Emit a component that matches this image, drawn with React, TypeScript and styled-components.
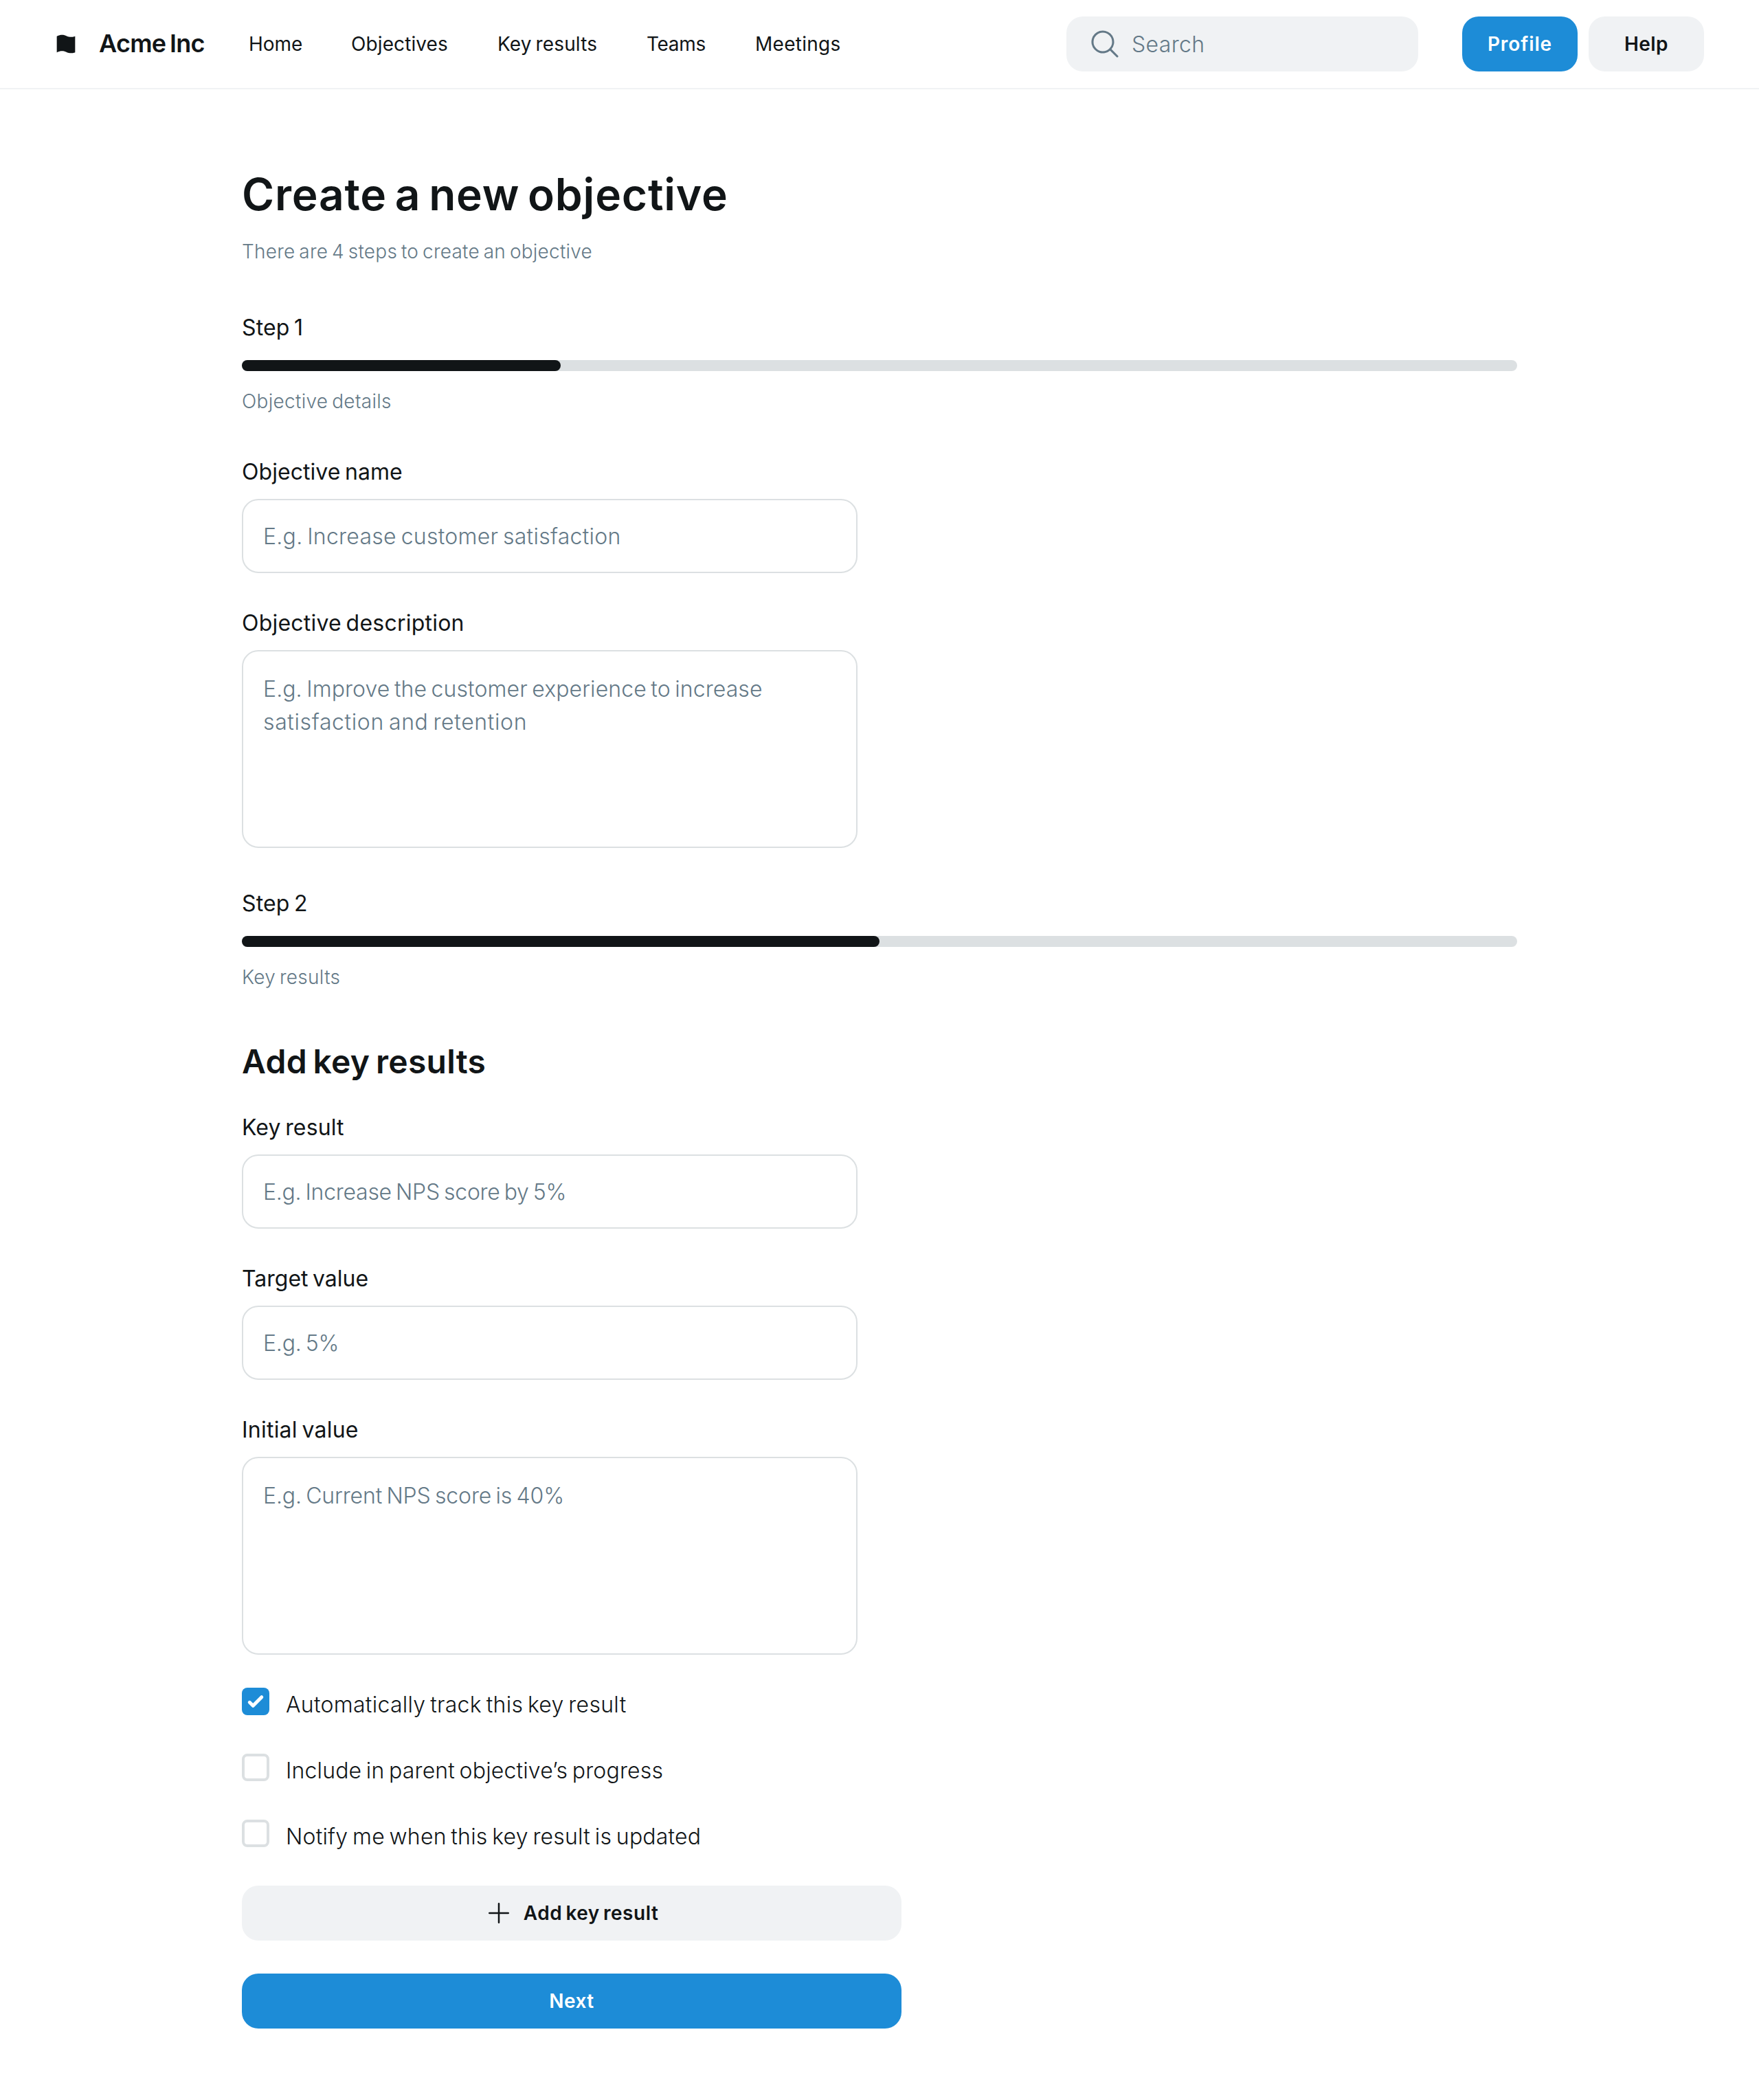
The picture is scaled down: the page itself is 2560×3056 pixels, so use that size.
import React, { useState } from "react";
import styled, { createGlobalStyle, css } from "styled-components";

const ink = "#111517";
const muted = "#647987";
const line = "#dce0e2";
const soft = "#f0f2f4";
const blue = "#1d8cd7";

const GlobalStyle = createGlobalStyle`
  *, *::before, *::after { box-sizing: border-box; }
  body {
    margin: 0;
    background: #fff;
    color: ${ink};
    font-family: Inter, "Noto Sans", "Liberation Sans", sans-serif;
  }
  input, textarea, button { font-family: inherit; color: inherit; margin: 0; }
`;

type Track = { $track?: number };
const tracking = css<Track>`
  letter-spacing: ${(p) => p.$track ?? 0}px;
  word-spacing: -0.08em;
`;

/* ---------- header ---------- */

const Page = styled.div`
  min-height: 3056px;
  background: #fff;
`;

const Header = styled.header`
  display: flex;
  align-items: center;
  justify-content: space-between;
  height: 130px;
  padding: 0 80px;
  border-bottom: 2px solid ${soft};
`;

const HeaderStart = styled.div`
  display: flex;
  align-items: center;
  gap: 64px;
`;

const Brand = styled.div`
  display: flex;
  align-items: center;
  gap: 32px;
  width: 218px;
`;

const BrandMark = styled.svg`
  width: 32px;
  height: 32px;
  flex: none;
`;

const BrandName = styled.h2<Track>`
  margin: 0;
  padding-bottom: 2px;
  font-size: 36px;
  line-height: 45px;
  font-weight: 600;
  white-space: nowrap;
  ${tracking}
`;

const Nav = styled.nav`
  display: grid;
  grid-template-columns: 77px 141px 145px 86px auto;
  column-gap: 72px;
`;

const NavLink = styled.a<Track>`
  font-size: 28px;
  line-height: 42px;
  font-weight: 400;
  white-space: nowrap;
  color: ${ink};
  text-decoration: none;
  ${tracking}
`;

const HeaderEnd = styled.div`
  display: flex;
  gap: 64px;
`;

const SearchBox = styled.label`
  display: flex;
  align-items: center;
  gap: 15px;
  width: 512px;
  height: 80px;
  padding-left: 32px;
  border-radius: 24px;
  background: ${soft};
  color: ${muted};
`;

const SearchInput = styled.input`
  flex: 1;
  min-width: 0;
  height: 50px;
  border: 0;
  padding: 1px 0 0;
  outline: none;
  background: transparent;
  font-size: 32px;
  font-weight: 300;
  letter-spacing: 0.36px;
  &::placeholder {
    color: ${muted};
    opacity: 1;
  }
`;

const HeaderButtons = styled.div`
  display: flex;
  gap: 16px;
`;

const Button = styled.button<Track & { $primary?: boolean; $width: number }>`
  display: flex;
  align-items: center;
  justify-content: center;
  gap: 16px;
  width: ${(p) => p.$width}px;
  height: 80px;
  padding: 0;
  border: 0;
  border-radius: 24px;
  background: ${(p) => (p.$primary ? blue : soft)};
  color: ${(p) => (p.$primary ? "#fff" : ink)};
  font-size: 28px;
  line-height: 42px;
  font-weight: 600;
  ${tracking}
`;

/* ---------- form ---------- */

const Main = styled.main`
  display: flex;
  flex-direction: column;
  width: 1856px;
  margin: 0 auto;
  padding-top: 112px;
`;

const Title = styled.h1<Track>`
  margin: 0;
  height: 80px;
  font-size: 64px;
  line-height: 82px;
  font-weight: 600;
  ${tracking}
`;

const Caption = styled.p<Track>`
  margin: 24px 0 0;
  height: 42px;
  font-size: 28px;
  line-height: 40px;
  font-weight: 300;
  color: ${muted};
  ${tracking}
`;

const StepBlock = styled.section<{ $top: number }>`
  padding-top: ${(p) => p.$top}px;
  padding-bottom: 32px;
`;

const Label = styled.span<Track>`
  display: block;
  height: 48px;
  font-size: 32px;
  line-height: 50px;
  font-weight: 400;
  ${tracking}
`;

const Bar = styled.div`
  margin-top: 24px;
  height: 16px;
  border-radius: 8px;
  background: ${line};
`;

const BarFill = styled.div`
  height: 100%;
  border-radius: 8px;
  background: ${ink};
`;

const SectionTitle = styled.h3<Track>`
  margin: 0;
  padding: 40px 0 18px;
  font-size: 48px;
  line-height: 58px;
  font-weight: 600;
  ${tracking}
`;

const Field = styled.label`
  display: block;
  width: 896px;
  padding: 24px 0;
`;

const fieldFrame = css`
  border: 2px solid ${line};
  border-radius: 24px;
  background: #fff;
`;

const Input = styled.input<Track>`
  ${fieldFrame}
  display: block;
  width: 100%;
  height: 108px;
  margin-top: 16px;
  padding: 1px 29px 0;
  outline: none;
  font-size: 32px;
  font-weight: 300;
  ${tracking}
  &::placeholder {
    color: ${muted};
    opacity: 1;
  }
`;

const AreaFrame = styled.div`
  display: grid;
  height: 288px;
  margin-top: 16px;
`;

const Area = styled.textarea`
  ${fieldFrame}
  grid-area: 1 / 1;
  width: 100%;
  height: 100%;
  padding: 31px 29px;
  resize: none;
  outline: none;
  font-size: 32px;
  line-height: 48px;
  font-weight: 300;
`;

const Hint = styled.span`
  grid-area: 1 / 1;
  padding: 33px 31px;
  pointer-events: none;
  color: ${muted};
  font-size: 32px;
  line-height: 48px;
  font-weight: 300;
`;

const HintLine = styled.span<Track>`
  display: block;
  white-space: nowrap;
  ${tracking}
`;

const CheckRow = styled.label`
  display: flex;
  gap: 24px;
  padding: 24px 0;
`;

const CheckBox = styled.span<{ $on: boolean }>`
  display: flex;
  flex: none;
  width: 40px;
  height: 40px;
  border: ${(p) => (p.$on ? "0" : `4px solid ${line}`)};
  border-radius: 8px;
  background: ${(p) => (p.$on ? blue : "transparent")};
`;

const CheckText = styled.span<Track>`
  height: 48px;
  font-size: 32px;
  line-height: 50px;
  font-weight: 300;
  ${tracking}
`;

const Action = styled.div`
  padding: 24px 0;
`;

/* ---------- icons ---------- */

const FlagIcon = () => (
  <BrandMark viewBox="0 0 48 48" fill={ink}>
    <path d="M4 42.4379C4 42.4379 14.0962 36.0744 24 41.1692C35.0664 46.8624 44 42.2078 44 42.2078L44 7.01134C44 7.01134 35.068 11.6577 24.0031 5.96913C14.0971 0.876274 4 7.27094 4 7.27094L4 42.4379Z" />
  </BrandMark>
);

const SearchIcon = () => (
  <svg width="48" height="48" viewBox="0 0 256 256" fill="currentColor">
    <path d="M229.66,218.34l-50.07-50.06a88.11,88.11,0,1,0-11.31,11.31l50.06,50.07a8,8,0,0,0,11.32-11.32ZM40,112a72,72,0,1,1,72,72A72.08,72.08,0,0,1,40,112Z" />
  </svg>
);

const PlusIcon = () => (
  <svg width="40" height="40" viewBox="0 0 256 256" fill="currentColor">
    <path d="M224,128a8,8,0,0,1-8,8H136v80a8,8,0,0,1-16,0V136H40a8,8,0,0,1,0-16h80V40a8,8,0,0,1,16,0v80h80A8,8,0,0,1,224,128Z" />
  </svg>
);

const TickIcon = () => (
  <svg width="40" height="40" viewBox="0 0 16 16" fill="#fff">
    <path d="M12.207 4.793a1 1 0 010 1.414l-5 5a1 1 0 01-1.414 0l-2-2a1 1 0 011.414-1.414L6.5 9.086l4.293-4.293a1 1 0 011.414 0z" />
  </svg>
);

/* ---------- pieces ---------- */

type Spaced = { text: string; track: number };

const navLinks: Spaced[] = [
  { text: "Home", track: -0.04 },
  { text: "Objectives", track: 0.1 },
  { text: "Key results", track: 0.16 },
  { text: "Teams", track: -0.33 },
  { text: "Meetings", track: 0.28 },
];

const checks: Spaced[] = [
  { text: "Automatically track this key result", track: 0.28 },
  { text: "Include in parent objective’s progress", track: 0.15 },
  { text: "Notify me when this key result is updated", track: 0.21 },
];

const Step = ({ label, note, percent, top }: { label: Spaced; note: Spaced; percent: number; top: number }) => (
  <StepBlock $top={top}>
    <Label $track={label.track}>{label.text}</Label>
    <Bar>
      <BarFill style={{ width: `${percent}%` }} />
    </Bar>
    <Caption $track={note.track}>{note.text}</Caption>
  </StepBlock>
);

const TextField = ({ label, hint }: { label: Spaced; hint: Spaced }) => (
  <Field>
    <Label $track={label.track}>{label.text}</Label>
    <Input placeholder={hint.text} $track={hint.track} />
  </Field>
);

const AreaField = ({ label, hint }: { label: Spaced; hint: Spaced[] }) => {
  const [value, setValue] = useState("");
  return (
    <Field>
      <Label $track={label.track}>{label.text}</Label>
      <AreaFrame>
        <Area value={value} onChange={(e) => setValue(e.target.value)} />
        {value === "" && (
          <Hint>
            {hint.map((h) => (
              <HintLine key={h.text} $track={h.track}>
                {h.text}
              </HintLine>
            ))}
          </Hint>
        )}
      </AreaFrame>
    </Field>
  );
};

export default function App() {
  return (
    <Page>
      <GlobalStyle />
      <Header>
        <HeaderStart>
          <Brand>
            <FlagIcon />
            <BrandName $track={-0.72}>Acme Inc</BrandName>
          </Brand>
          <Nav>
            {navLinks.map((n) => (
              <NavLink key={n.text} $track={n.track}>
                {n.text}
              </NavLink>
            ))}
          </Nav>
        </HeaderStart>
        <HeaderEnd>
          <SearchBox>
            <SearchIcon />
            <SearchInput placeholder="Search" />
          </SearchBox>
          <HeaderButtons>
            <Button $primary $width={168} $track={0.9}>
              Profile
            </Button>
            <Button $width={168} $track={0.4}>
              Help
            </Button>
          </HeaderButtons>
        </HeaderEnd>
      </Header>

      <Main>
        <Title $track={0.8}>Create a new objective</Title>
        <Caption $track={0.23}>There are 4 steps to create an objective</Caption>

        <Step
          top={64}
          label={{ text: "Step 1", track: 0.1 }}
          note={{ text: "Objective details", track: 0.29 }}
          percent={25}
        />
        <TextField
          label={{ text: "Objective name", track: 0.05 }}
          hint={{ text: "E.g. Increase customer satisfaction", track: 0.27 }}
        />
        <AreaField
          label={{ text: "Objective description", track: 0.22 }}
          hint={[
            { text: "E.g. Improve the customer experience to increase", track: 0.08 },
            { text: "satisfaction and retention", track: 0.62 },
          ]}
        />

        <Step
          top={32}
          label={{ text: "Step 2", track: 0.11 }}
          note={{ text: "Key results", track: 0.27 }}
          percent={50}
        />
        <SectionTitle $track={0.29}>Add key results</SectionTitle>
        <TextField
          label={{ text: "Key result", track: 0.13 }}
          hint={{ text: "E.g. Increase NPS score by 5%", track: -0.27 }}
        />
        <TextField
          label={{ text: "Target value", track: 0 }}
          hint={{ text: "E.g. 5%", track: -0.2 }}
        />
        <AreaField
          label={{ text: "Initial value", track: 0.23 }}
          hint={[{ text: "E.g. Current NPS score is 40%", track: -0.13 }]}
        />

        {checks.map((c, i) => (
          <CheckRow key={c.text}>
            <CheckBox $on={i === 0}>{i === 0 && <TickIcon />}</CheckBox>
            <CheckText $track={c.track}>{c.text}</CheckText>
          </CheckRow>
        ))}

        <Action>
          <Button $width={960} $track={0.5}>
            <PlusIcon />
            Add key result
          </Button>
        </Action>
        <Action>
          <Button $primary $width={960} $track={0.46}>
            Next
          </Button>
        </Action>
      </Main>
    </Page>
  );
}
